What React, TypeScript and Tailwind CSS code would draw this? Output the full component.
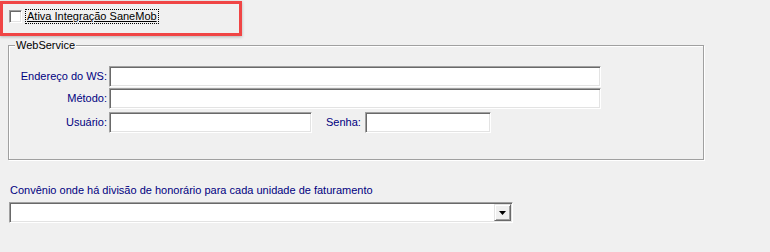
export default function App() {
  const sunken =
    "bg-white border border-t-[#a0a0a0] border-l-[#a0a0a0] border-b-white border-r-white shadow-[inset_1px_1px_0_#696969,inset_-1px_-1px_0_#e3e3e3]";

  return (
    <div
      className="relative w-[770px] h-[252px] bg-[#f0f0f0] text-[11px] leading-[13px] text-black overflow-hidden"
      style={{ fontFamily: '"Liberation Sans", Arial, sans-serif' }}
    >
      {/* Ativa integração */}
      <div className="flex items-center pt-[9px] pl-[9px] h-[15px] box-content">
        <div className={`w-[13px] h-[13px] ${sunken}`} />
        <div className="ml-[3px] px-[1px] h-[15px] flex items-center border border-dotted border-black">
          <span className="underline">Ativa Integração SaneMob</span>
        </div>
      </div>

      {/* WebService group */}
      <div className="relative ml-[8px] mt-[21px] w-[696px] h-[115px] border border-[#a0a0a0] shadow-[inset_1px_1px_0_#fff,1px_1px_0_#fff]">
        <span className="absolute -top-[7px] left-[6px] px-[1px] bg-[#f0f0f0] text-black">WebService</span>

        <div className="flex flex-col pt-[20px] gap-[1px]">
          <div className="flex items-center">
            <label className="w-[98px] text-right text-[#000080]">Endereço do WS:</label>
            <div className={`ml-[2px] w-[492px] h-[21px] ${sunken}`} />
          </div>
          <div className="flex items-center">
            <label className="w-[98px] text-right text-[#000080]">Método:</label>
            <div className={`ml-[2px] w-[492px] h-[21px] ${sunken}`} />
          </div>
          <div className="flex items-center mt-[2px]">
            <label className="w-[98px] text-right text-[#000080]">Usuário:</label>
            <div className={`ml-[2px] w-[203px] h-[21px] ${sunken}`} />
            <label className="ml-[14px] text-[#000080]">Senha:</label>
            <div className={`ml-[4px] w-[126px] h-[21px] ${sunken}`} />
          </div>
        </div>
      </div>

      {/* Convênio */}
      <div className="ml-[10px] mt-[24px] text-[#000080]">
        Convênio onde há divisão de honorário para cada unidade de faturamento
      </div>
      <div className={`ml-[9px] mt-[5px] w-[504px] h-[21px] flex justify-end items-stretch p-[1px] ${sunken}`}>
        <div className="w-[17px] bg-[#f0f0f0] border border-t-[#e3e3e3] border-l-[#e3e3e3] border-b-[#696969] border-r-[#696969] shadow-[inset_1px_1px_0_#fff,inset_-1px_-1px_0_#a0a0a0] flex items-center justify-center">
          <svg width="7" height="4" viewBox="0 0 7 4">
            <path d="M0 0h7L3.5 4z" fill="#000" />
          </svg>
        </div>
      </div>

      {/* red annotation box */}
      <div className="absolute left-0 top-[1px] w-[242px] h-[35px] border-[3px] border-[#f04545] shadow-[0_1px_3px_rgba(0,0,0,0.25)] pointer-events-none" />
    </div>
  );
}
